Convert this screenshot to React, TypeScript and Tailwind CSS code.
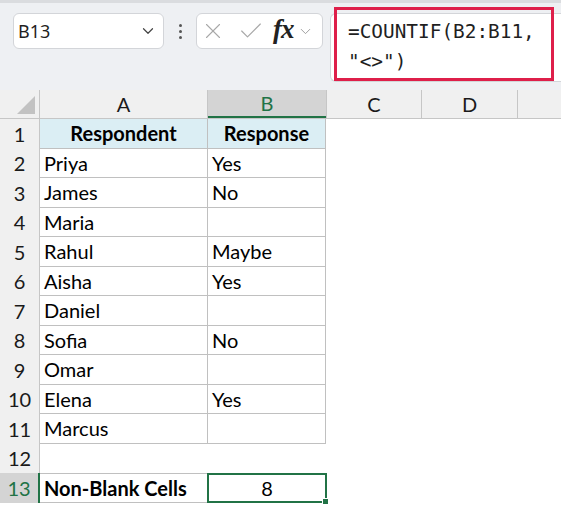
import { ChevronDown, X, Check } from "lucide-react";

type Row = { a: string; b: string };

const rows: Row[] = [
  { a: "Priya", b: "Yes" },
  { a: "James", b: "No" },
  { a: "Maria", b: "" },
  { a: "Rahul", b: "Maybe" },
  { a: "Aisha", b: "Yes" },
  { a: "Daniel", b: "" },
  { a: "Sofia", b: "No" },
  { a: "Omar", b: "" },
  { a: "Elena", b: "Yes" },
  { a: "Marcus", b: "" },
];

function RowHeader({ n, selected }: { n: number; selected?: boolean }) {
  return (
    <div
      className={`w-[40px] shrink-0 h-full flex items-center justify-center border-r ${
        selected
          ? "bg-[#d4d4d4] text-[#217346] border-r-2 border-[#217346]"
          : "bg-[#f0f0f0] text-[#1a1a1a] border-[#c6c6c6]"
      }`}
    >
      {n}
    </div>
  );
}

function FormulaBar() {
  return (
    <div className="h-[90px] bg-[#eef0f3] border-t-[3px] border-[#dadcdf] flex items-start pt-[10px] relative">
      {/* name box */}
      <div className="ml-[13px] w-[151px] h-[36px] bg-white border border-[#d3d5d9] rounded-[6px] flex items-center pl-[4px] pr-[6px] font-['Noto_Sans',sans-serif] text-[18px] text-[#1f1f1f]">
        <span className="flex-1">B13</span>
        <ChevronDown size={18} strokeWidth={1.6} className="text-[#444]" />
      </div>
      {/* dots */}
      <div className="w-[32px] h-[36px] flex flex-col items-center justify-center gap-[3px]">
        <span className="w-[3px] h-[3px] rounded-full bg-[#555]" />
        <span className="w-[3px] h-[3px] rounded-full bg-[#555]" />
        <span className="w-[3px] h-[3px] rounded-full bg-[#555]" />
      </div>
      {/* cancel / enter / fx */}
      <div className="w-[127px] h-[36px] bg-white border border-[#d3d5d9] rounded-[6px] flex items-center pl-[3px] gap-[3px]">
        <X size={26} strokeWidth={1} className="text-[#a8a8a8]" />
        <Check size={28} strokeWidth={1} className="text-[#a8a8a8] ml-[8px]" />
        <span className="ml-[5px] font-['Liberation_Serif',serif] italic font-bold text-[27px] leading-none text-[#222] tracking-[-1px] pb-[3px]">
          fx
        </span>
        <ChevronDown size={17} strokeWidth={1.3} className="text-[#999]" />
      </div>
      {/* formula field */}
      <div className="ml-[7px] flex-1 h-[69px] bg-white border border-[#d3d5d9] rounded-l-[6px] border-r-0 relative">
        <div className="absolute left-[3px] top-[-7px] w-[220px] h-[74px] border-[3px] border-[#de1f4a]" />
        <div className="pl-[17px] pt-[3px] font-['DejaVu_Sans_Mono',monospace] text-[19.4px] leading-[30px] text-[#1f1f1f]">
          <div>=COUNTIF(B2:B11,</div>
          <div>"&lt;&gt;")</div>
        </div>
      </div>
    </div>
  );
}

function ColumnHeaders() {
  return (
    <div className="flex h-[29px] bg-[#f0f0f0] border-b border-[#c6c6c6] text-[20px] text-[#1a1a1a]">
      <div className="w-[40px] shrink-0 border-r border-[#c6c6c6] flex items-end justify-end pr-[4px] pb-[4px]">
        <div className="w-[18px] h-[18px] bg-[#c2c2c2] [clip-path:polygon(100%_0,100%_100%,0_100%)]" />
      </div>
      <div className="w-[168px] shrink-0 border-r border-[#c6c6c6] flex items-center justify-center">A</div>
      <div className="w-[118px] shrink-0 bg-[#d4d4d4] text-[#217346] border-b-2 border-[#217346] flex items-center justify-center">
        B
      </div>
      <div className="w-[96px] shrink-0 border-l border-r border-[#c6c6c6] flex items-center justify-center">C</div>
      <div className="w-[96px] shrink-0 border-r border-[#c6c6c6] flex items-center justify-center">D</div>
      <div className="flex-1" />
    </div>
  );
}

export default function App() {
  return (
    <div className="w-[561px] h-[506px] overflow-hidden bg-white font-['Lato',sans-serif]">
      <FormulaBar />
      <ColumnHeaders />

      {/* row 1 - headers of the table */}
      <div className="flex h-[29.5px] text-[20px]">
        <RowHeader n={1} />
        <div className="w-[168px] shrink-0 bg-[#dbeef4] border-r border-b border-[#c0c0c0] flex items-center justify-center font-bold text-black">
          Respondent
        </div>
        <div className="w-[118px] shrink-0 bg-[#dbeef4] border-r border-b border-[#c0c0c0] flex items-center justify-center font-bold text-black">
          Response
        </div>
        <div className="flex-1" />
      </div>

      {rows.map((r, i) => (
        <div key={i} className="flex h-[29.5px] text-[20px] text-black">
          <RowHeader n={i + 2} />
          <div className="w-[168px] shrink-0 border-r border-b border-[#c0c0c0] flex items-center pl-[4px]">{r.a}</div>
          <div className="w-[118px] shrink-0 border-r border-b border-[#c0c0c0] flex items-center pl-[4px]">{r.b}</div>
          <div className="flex-1" />
        </div>
      ))}

      {/* row 12 - empty */}
      <div className="flex h-[29.5px] text-[20px]">
        <RowHeader n={12} />
        <div className="flex-1" />
      </div>

      {/* row 13 - result */}
      <div className="flex h-[29.5px] text-[20px] text-black">
        <RowHeader n={13} selected />
        <div className="w-[168px] shrink-0 border-t border-b border-[#c0c0c0] flex items-center pl-[4px] font-bold">
          Non-Blank Cells
        </div>
        <div className="w-[120px] shrink-0 -ml-[1px] border-2 border-[#217346] flex items-center justify-center relative">
          8
          <span className="absolute right-[-4px] bottom-[-4px] w-[7px] h-[7px] bg-[#217346] border border-white" />
        </div>
        <div className="flex-1" />
      </div>
    </div>
  );
}
